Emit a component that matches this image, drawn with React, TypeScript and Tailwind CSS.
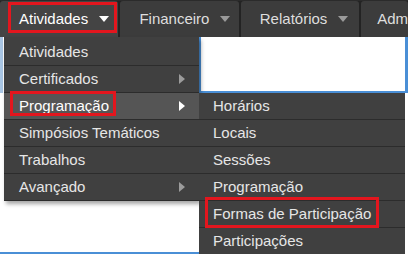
import React from "react";

function Down({ active }: { active?: boolean }) {
  return (
    <svg width="10" height="6" viewBox="0 0 10 6" className="shrink-0">
      <polygon points="0,0 10,0 5,6" fill={active ? "#ffffff" : "#9a9a9a"} />
    </svg>
  );
}

function Right({ active }: { active?: boolean }) {
  return (
    <svg width="6" height="10" viewBox="0 0 6 10" className="shrink-0">
      <polygon points="0,0 6,5 0,10" fill={active ? "#ffffff" : "#9c9c9c"} />
    </svg>
  );
}

const topItems = [
  { label: "Atividades", active: true },
  { label: "Financeiro" },
  { label: "Relatórios" },
];

const menu = [
  { label: "Atividades" },
  { label: "Certificados", sub: true },
  { label: "Programação", sub: true, hover: true },
  { label: "Simpósios Temáticos" },
  { label: "Trabalhos" },
  { label: "Avançado", sub: true },
];

const subMenu = ["Horários", "Locais", "Sessões", "Programação", "Formas de Participação", "Participações"];

export default function App() {
  return (
    <div className="relative w-[408px] h-[254px] overflow-hidden bg-white font-['Liberation_Sans',Arial,sans-serif] text-[15px]">
      <nav className="flex h-[37px] gap-[2px] bg-[#232323] border-t border-[#2b2b2b]">
        {topItems.map((it) => (
          <div
            key={it.label}
            className={`flex items-center w-[123px] first:w-[123px] rounded-t-[3px] pl-[19px] gap-[11px] ${
              it.active ? "bg-[#444444] text-white" : "bg-[#3c3c3c] text-[#dedede] w-[118px] pl-[14px]"
            }`}
          >
            <span>{it.label}</span>
            <Down active={it.active} />
          </div>
        ))}
        <div className="flex flex-1 items-center rounded-t-[3px] bg-[#3c3c3c] pl-[16px] text-[#dedede]">Adm</div>
      </nav>

      <div className="flex h-[56px]">
        <div className="w-[199px] border-l-[3px] border-[#a9c6e4]" />
        <div className="flex-1 border-l-2 border-b-2 border-r-[3px] border-[#4a8fd6]" />
      </div>
      <div className="h-[159px]" />
      <div className="h-[2px] w-[200px] bg-[#4a8fd6]" />

      <div className="absolute left-[4px] top-[37px] w-[195px] bg-[#404040] pt-[2px] shadow-[2px_3px_4px_rgba(0,0,0,0.35)]">
        {menu.map((m) => (
          <div
            key={m.label}
            className={`flex h-[27px] items-center justify-between border-b border-[#2c2c2c] pl-[15px] pr-[14px] ${
              m.hover ? "bg-[#555555] text-white" : "text-[#e6e6e6]"
            }`}
          >
            <span>{m.label}</span>
            {m.sub && <Right active={m.hover} />}
          </div>
        ))}
      </div>

      <div className="absolute left-[199px] top-[93px] w-[206px] bg-[#404040]">
        {subMenu.map((s) => (
          <div key={s} className="flex h-[27px] items-center border-b border-[#2c2c2c] pl-[14px] text-[#e6e6e6]">
            {s}
          </div>
        ))}
      </div>

      <div className="absolute left-[8px] top-[2px] w-[109px] h-[31px] border-[3px] border-[#e3161e]" />
      <div className="absolute left-[10px] top-[91px] w-[106px] h-[25px] border-[3px] border-[#e3161e]" />
      <div className="absolute left-[205px] top-[197px] w-[174px] h-[31px] border-[3px] border-[#e3161e]" />
    </div>
  );
}
